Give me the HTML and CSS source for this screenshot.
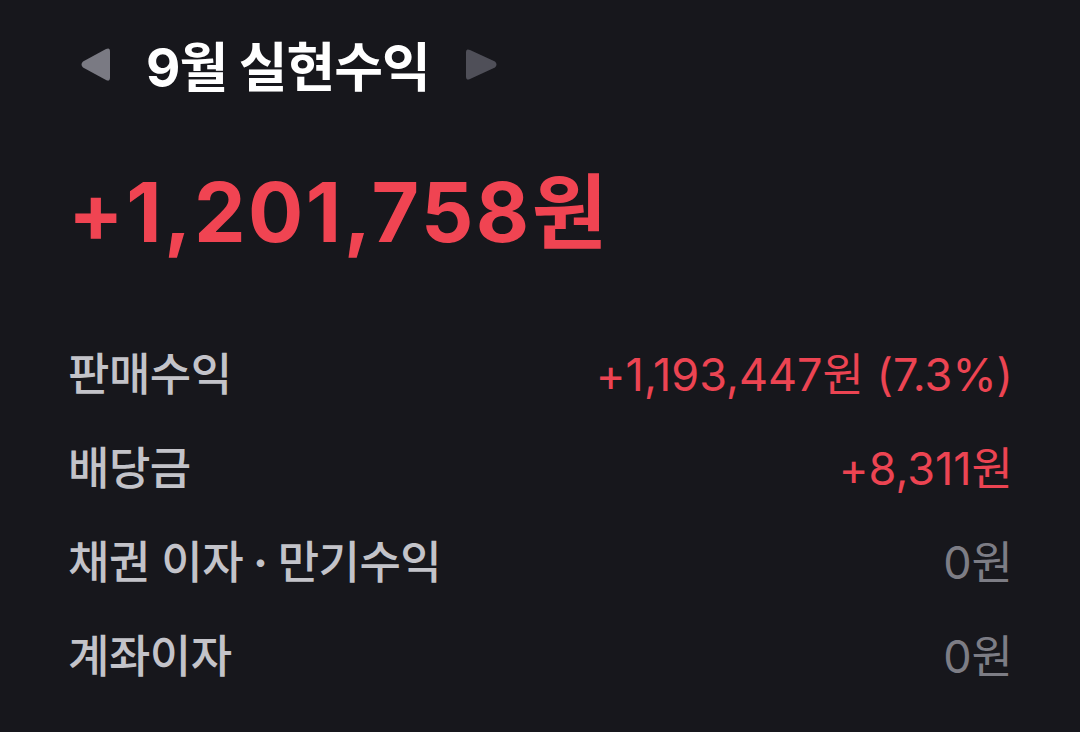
FILE: index.html
```html
<!DOCTYPE html>
<html lang="ko">
<head>
    <meta charset="UTF-8">
    <meta name="viewport" content="width=device-width, initial-scale=1.0">
    <title>실현수익</title>
    <link rel="stylesheet" href="styles.css">
</head>
<body>
    <div class="panel">
        <!-- 월 선택 -->
        <div class="month">
            <button class="arrow prev" aria-label="이전 달">
                <svg viewBox="0 0 30 35" width="30" height="35"><path d="M30 4.5 Q30 0 26 2 L3 14.5 Q0 17.5 3 20.5 L26 33 Q30 35 30 30.5 Z" /></svg>
            </button>
            <h1>9월 실현수익</h1>
            <button class="arrow next" aria-label="다음 달">
                <svg viewBox="0 0 32 33" width="32" height="33"><path d="M0 4.5 Q0 0 4 2 L29 13.5 Q32 16.5 29 19.5 L4 31 Q0 33 0 28.5 Z" /></svg>
            </button>
        </div>

        <div class="total">+1,201,758원</div>

        <ul class="rows">
            <li><span class="label">판매수익</span><span class="value up">+1,193,447원 (7.3%)</span></li>
            <li><span class="label">배당금</span><span class="value up">+8,311원</span></li>
            <li><span class="label">채권 이자<span class="dot">·</span>만기수익</span><span class="value zero">0원</span></li>
            <li><span class="label">계좌이자</span><span class="value zero">0원</span></li>
        </ul>
    </div>
</body>
</html>
```

FILE: styles.css
```css
body {
    margin: 0;
    background: #17171c;
    font-family: Inter, "Noto Sans CJK KR", sans-serif;
    color: #fff;
}

.panel {
    padding: 26px 67px 0 68px;
}

.month {
    display: flex;
    align-items: center;
    gap: 36px;
    margin-left: 12px;
}

.arrow {
    background: none;
    border: none;
    padding: 0;
    display: flex;
}

.arrow.prev svg {
    fill: #7a7a83;
}

.arrow.next svg {
    fill: #4f4f58;
}

h1 {
    margin: 0;
    font-size: 53px;
    font-weight: 700;
    letter-spacing: -1px;
    color: #fff;
}

.total {
    margin-top: 62px;
    font-size: 82px;
    font-weight: 700;
    letter-spacing: 2.5px;
    color: #f04452;
    line-height: 1.2;
}

.rows {
    list-style: none;
    margin: 62px 0 0;
    padding: 0;
}

.rows li {
    display: flex;
    justify-content: space-between;
    align-items: center;
    height: 94px;
    font-size: 45px;
}

.label {
    color: #c3c3c9;
    font-weight: 500;
    letter-spacing: -0.5px;
}

/* 가운뎃점 양옆 여백 */
.dot {
    margin: 0 10px;
    font-weight: 700;
}

.value.up {
    color: #ec4452;
}

.value.zero {
    color: #7d7d85;
}
```
